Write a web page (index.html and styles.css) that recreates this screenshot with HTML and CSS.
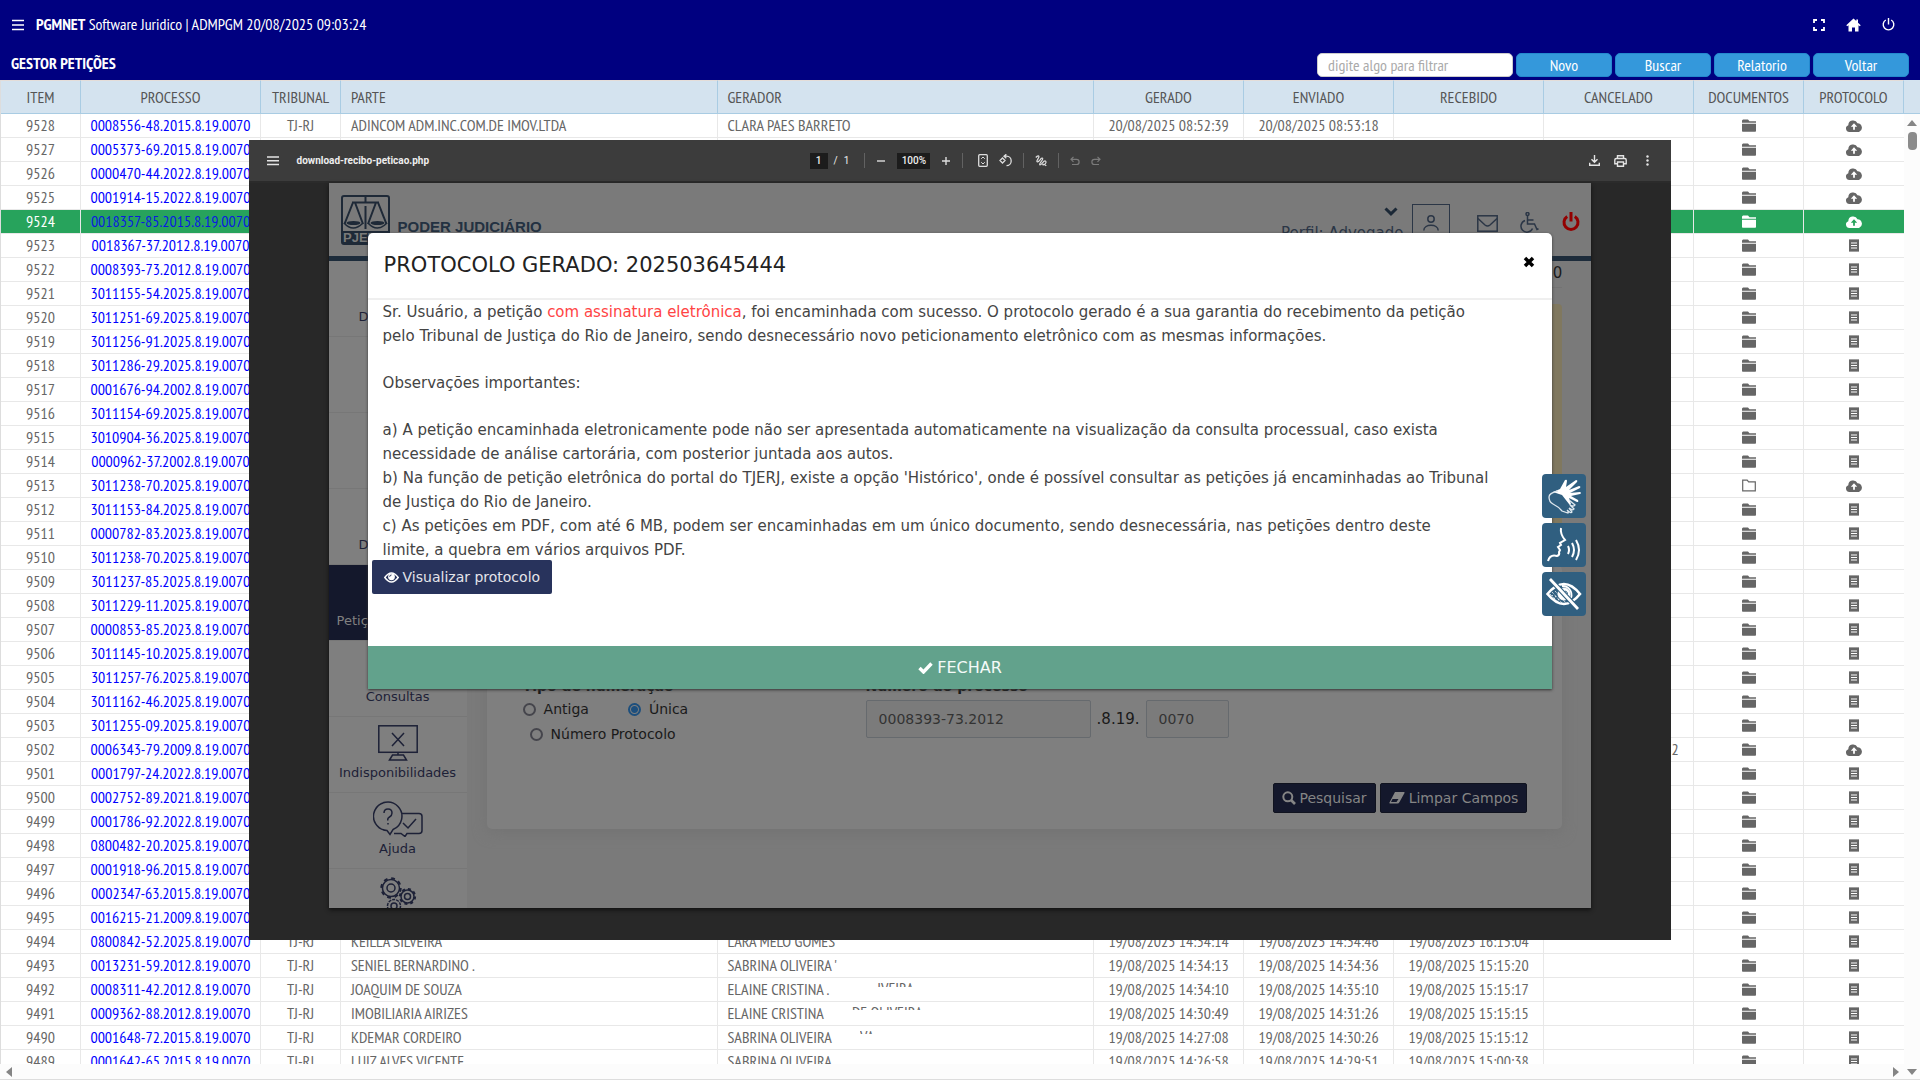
FILE: index.html
```html
<!DOCTYPE html>
<html lang="pt-BR">
<head>
<meta charset="utf-8">
<title>PGMNET Software Juridico</title>
<link rel="stylesheet" href="styles.css">
</head>
<body>
<svg class="sprite" aria-hidden="true">
  <symbol id="folder" viewBox="0 0 14 13"><path d="M0 1.5 1 .5h5l1.5 1.7H14v1.5H0zM0 4.7h14V12q0 .8-.8.8H.8Q0 12.800 0 12z"/></symbol>
  <symbol id="folder-open" viewBox="0 0 14 13"><path d="M.7 11.800V1.200h4.500l1.400 1.700h6.700v8.900z" fill="none" stroke="currentColor" stroke-width="1.200"/></symbol>
  <symbol id="cloud" viewBox="0 0 16 12"><path fill-rule="evenodd" d="M3.500 12A3.500 3.500 0 0 1 2.300 5.200 4.800 4.800 0 0 1 11.500 3.300 4.500 4.500 0 0 1 13 12zM8 3.300 4.800 6.800h2.300v2.900h1.800V6.800h2.300z"/></symbol>
  <symbol id="receipt" viewBox="0 0 10 13"><path fill-rule="evenodd" d="M0 0l1 .8L2 0l1 .8L4 0l1 .8L6 0l1 .8L8 0l1 .8L10 0v13l-1-.8-1 .8-1-.8-1 .8-1-.8-1 .8-1-.8-1 .8-1-.8-1 .8zM2 3.400v1h6v-1zm0 2.600v1h6V6zm0 2.600v1h6v-1z"/></symbol>
</svg>

<header class="topbar">
  <div class="brand-row">
    <button class="icon-btn" aria-label="Menu"><svg width="12" height="12" viewBox="0 0 12 12"><path d="M0 1.500h12M0 6h12M0 10.500h12" stroke="#fff" stroke-width="1.300"/></svg></button>
    <p class="brand"><b>PGMNET</b> Software Juridico | ADMPGM 20/08/2025 09:03:24</p>
    <nav class="top-icons">
      <button class="icon-btn" aria-label="Tela cheia"><svg width="12" height="12" viewBox="0 0 12 12" fill="none" stroke="#fff" stroke-width="1.800"><path d="M1 4V1h3M8 1h3v3M11 8v3H8M4 11H1V8"/></svg></button>
      <button class="icon-btn" aria-label="Início"><svg width="15" height="14" viewBox="0 0 15 14" fill="#fff"><path d="M7.500.5.3 7.300l.9.900L2.500 7.300V13.500H6V9.500h3v4h3.500V7.300l1.300.9.900-.9-2.700-2.600V1.500h-1.700v1.600z"/></svg></button>
      <button class="icon-btn" aria-label="Sair"><svg width="13" height="13" viewBox="0 0 13 13" fill="none" stroke="#fff" stroke-width="1.400"><path d="M6.500 0v6.500M3.800 2a5.300 5.300 0 1 0 5.400 0"/></svg></button>
    </nav>
  </div>
  <div class="action-row">
    <h1 class="screen-title">GESTOR PETIÇÕES</h1>
    <div class="actions">
      <input class="filter" type="text" placeholder="digite algo para filtrar" aria-label="Filtrar">
      <button class="action">Novo</button>
      <button class="action">Buscar</button>
      <button class="action">Relatorio</button>
      <button class="action">Voltar</button>
    </div>
  </div>
</header>

<main class="grid-area">
  <div class="grid-view">
    <table class="grid">
      <colgroup>
        <col class="c-item"><col class="c-proc"><col class="c-item"><col><col>
        <col class="c-date"><col class="c-date"><col class="c-date"><col class="c-date"><col class="c-docs"><col class="c-prot">
      </colgroup>
      <thead><tr>
        <th>ITEM</th><th>PROCESSO</th><th>TRIBUNAL</th><th class="left">PARTE</th><th class="left">GERADOR</th>
        <th>GERADO</th><th>ENVIADO</th><th>RECEBIDO</th><th>CANCELADO</th><th>DOCUMENTOS</th><th>PROTOCOLO</th>
      </tr></thead>
      <tbody id="rows"></tbody>
    </table>
    <div class="vscroll">
      <div class="vscroll-head"></div>
      <svg class="arrow-up" width="10" height="6" viewBox="0 0 10 6"><path d="M0 6 5 0l5 6z" fill="#858585"/></svg>
      <div class="thumb"></div>
    </div>
  </div>
  <div class="hscroll">
    <svg width="6" height="10" viewBox="0 0 6 10"><path d="M6 0 0 5l6 5z" fill="#858585"/></svg>
    <span class="spacer"></span>
    <svg width="6" height="10" viewBox="0 0 6 10"><path d="M0 0l6 5-6 5z" fill="#858585"/></svg>
    <svg width="10" height="6" viewBox="0 0 10 6"><path d="M0 0h10L5 6z" fill="#858585"/></svg>
  </div>
</main>

<div class="overlay">
  <section class="viewer" aria-label="download-recibo-peticao.php">
    <div class="toolbar">
      <div class="tb-left">
        <svg width="12" height="10" viewBox="0 0 12 10"><path d="M0 1h12M0 4.700h12M0 8.400h12" stroke="#e4e4e4" stroke-width="1.500"/></svg>
        <span class="file">download-recibo-peticao.php</span>
      </div>
      <div class="tb-mid">
        <span class="page-no"><input class="tb-input pg" value="1" aria-label="Página"> <span>/</span> <span>1</span></span>
        <i class="tb-sep"></i>
        <svg width="10" height="10" viewBox="0 0 10 10"><path d="M1 5h8" stroke="#ddd" stroke-width="1.400"/></svg>
        <input class="tb-input zoom" value="100%" aria-label="Zoom">
        <svg width="10" height="10" viewBox="0 0 10 10"><path d="M1 5h8M5 1v8" stroke="#ddd" stroke-width="1.400"/></svg>
        <i class="tb-sep"></i>
        <svg class="fit" width="10" height="13" viewBox="0 0 10 13" fill="none" stroke="#ddd" stroke-width="1.300"><rect x=".7" y=".7" width="8.600" height="11.600" rx="1"/><path d="M3.200 4.800 5 3l1.800 1.800M3.200 8.200 5 10l1.800-1.800" stroke-width="1"/></svg>
        <svg width="13" height="13" viewBox="0 0 13 13" fill="none" stroke="#ddd" stroke-width="1.300"><path d="M3.500 4 6 6.500 3.500 9 1 6.500zM5 2.200h2.500a4.700 4.700 0 0 1 0 9.400M7.300.2 5 2.200l2.300 2"/></svg>
        <i class="tb-sep"></i>
        <svg width="12" height="12" viewBox="0 0 12 12" fill="none" stroke="#ddd" stroke-width="1.200"><path d="M.8 2.500C2.500.5 4.500.3 3.800 2.200S.8 6.500 2.500 6.800 6.300 2 7.600 3.200 3.500 8.800 4.800 9.800 8.500 5.200 10.300 6 10 10 8.300 10s.2-2 3 .8"/></svg>
        <i class="tb-sep"></i>
        <svg width="10" height="10" viewBox="0 0 10 10" fill="none" stroke="#7b7b7b" stroke-width="1.200"><path d="M3.500.8 1 3.300l2.500 2.500M1.200 3.300H6.500a2.600 2.600 0 0 1 0 5.200H2"/></svg>
        <svg width="10" height="10" viewBox="0 0 10 10" fill="none" stroke="#7b7b7b" stroke-width="1.200"><path d="M6.500.8 9 3.300 6.500 5.800M8.800 3.300H3.500a2.600 2.600 0 0 0 0 5.200H8"/></svg>
      </div>
      <div class="tb-right">
        <svg width="11" height="11" viewBox="0 0 11 11" fill="none" stroke="#e4e4e4" stroke-width="1.400"><path d="M5.500 0v7M2.500 4.300l3 3 3-3M.7 7.800v2.500h9.600V7.800"/></svg>
        <svg width="13" height="12" viewBox="0 0 13 12" fill="none" stroke="#e4e4e4" stroke-width="1.400"><path d="M3.500 3.500V.8h6v2.700M3 8.800H.8V5q0-1.500 1.500-1.500h8.400q1.500 0 1.500 1.500v3.800H10M3.500 7h6v4.300h-6z"/></svg>
        <svg width="13" height="11" viewBox="0 0 13 11" fill="#e4e4e4"><circle cx="6.500" cy="1.500" r="1.200"/><circle cx="6.500" cy="5.500" r="1.200"/><circle cx="6.500" cy="9.500" r="1.200"/></svg>
      </div>
    </div>

    <div class="canvas">
      <div class="sheet">
        <header class="court-head">
          <svg class="logo" width="49" height="50" viewBox="0 0 49 50">
            <rect x="1" y="1" width="47" height="48" rx="2" fill="none" stroke="#1e2937" stroke-width="2"/>
            <rect x="1" y="36" width="47" height="13" fill="#1e2937"/>
            <path d="M24.500 2v5M11 7.500h27M24.500 11v23M12 7.500 3.500 29M14 7.500 22 29M35 7.500 27 29M37 7.500 45.500 29" fill="none" stroke="#1e2937" stroke-width="2"/>
            <path d="M3 28q9 10 19 0M27 28q9 10 19 0" fill="none" stroke="#1e2937" stroke-width="1.500"/>
            <ellipse cx="12.500" cy="28" rx="7" ry="2" fill="#1e2937"/><ellipse cx="36.500" cy="28" rx="7" ry="2" fill="#1e2937"/>
            <text x="2" y="47" font-family="Liberation Sans" font-size="13" font-weight="700" fill="#7a7a7a">PJERJ</text>
          </svg>
          <strong class="court-name">PODER JUDICIÁRIO</strong>
          <span class="profile">
            <svg width="14" height="9" viewBox="0 0 14 9"><path d="M1.500 1.500 7 6.800l5.500-5.300" fill="none" stroke="#1b2836" stroke-width="3"/></svg>
            <span>Perfil: Advogado</span>
          </span>
          <span class="user-box"><svg width="16" height="16" viewBox="0 0 16 16" fill="none" stroke="#2b3646" stroke-width="1.500"><circle cx="8" cy="4" r="3.200"/><path d="M.8 15.500c0-7 14.400-7 14.400 0"/></svg></span>
          <svg class="mail" width="21" height="17" viewBox="0 0 21 17" fill="none" stroke="#2b3646" stroke-width="1.500"><rect x=".8" y=".8" width="19.400" height="15.400"/><path d="M1 3.500 8 10q2.500 2 5 0l7-6.500"/></svg>
          <svg class="chair" width="19" height="21" viewBox="0 0 19 21" fill="none" stroke="#2b3646" stroke-width="1.500"><circle cx="7.500" cy="2" r="1.500"/><path d="M7.500 4v8h7l2.500 5.500 1.500-.7M7.500 8h6M5 8.500a6 6 0 1 0 7.500 8"/></svg>
          <svg class="off" width="18" height="20" viewBox="0 0 18 20" fill="none" stroke="#930000" stroke-width="3"><path d="M9 0v9.500M5.200 4.500a7 7 0 1 0 7.600 0"/></svg>
        </header>
        <div class="court-body">
          <nav class="side">
            <a href="#" class="side-item start">D</a>
            <a href="#" class="side-item"></a>
            <a href="#" class="side-item"></a>
            <a href="#" class="side-item start">D</a>
            <a href="#" class="side-item active">Petições</a>
            <a href="#" class="side-item">Consultas</a>
            <a href="#" class="side-item"><svg width="40" height="36" viewBox="0 0 40 36" fill="none" stroke="#1d2137" stroke-width="1.500"><rect x=".8" y=".8" width="38.400" height="26.500"/><path d="M14 8l12 13M26 8 14 21M20 28v2M11.500 35l3-5h11l3 5z"/></svg>Indisponibilidades</a>
            <a href="#" class="side-item"><svg width="50" height="36" viewBox="0 0 50 36" fill="none" stroke="#1d2137" stroke-width="1.500"><path d="M14 29.500A14.200 14.200 0 1 1 20 28.500L17 33.500z"/><path d="M29 12.500h17q3 0 3 3v14q0 3-3 3H34l-2 3-4-3H21M30 22l5 5 8-9M11 12q0-4 4-4t4 4q0 2.500-2.500 4T15 19.500M15 22v1.500"/></svg>Ajuda</a>
            <a href="#" class="side-item last"><svg width="38" height="36" viewBox="0 0 38 36" fill="none" stroke="#1d2137" stroke-width="1.500"><circle cx="12" cy="11" r="4"/><circle cx="12" cy="11" r="8.500"/><circle cx="12" cy="11" r="9.700" stroke-width="2" stroke-dasharray="3.800 3.800"/><circle cx="28.500" cy="19.500" r="3"/><circle cx="28.500" cy="19.500" r="6.500"/><circle cx="28.500" cy="19.500" r="7.600" stroke-dasharray="3 3" stroke-width="2"/><circle cx="15" cy="29" r="3"/><circle cx="15" cy="29" r="6.500" stroke-dasharray="3 1"/></svg></a>
          </nav>
          <div class="content">
            <p class="crumb">0</p>
            <div class="notice"></div>
            <form class="panel">
              <div class="fields">
                <fieldset class="kinds">
                  <legend>Tipo de numeração</legend>
                  <div class="radio-row">
                    <label><input type="radio" name="tipo"> Antiga</label>
                    <label><input type="radio" name="tipo" checked> Única</label>
                  </div>
                  <div class="radio-row second"><label><input type="radio" name="tipo"> Número Protocolo</label></div>
                </fieldset>
                <div class="number">
                  <label for="num">Número do processo</label>
                  <div class="number-row"><input id="num" class="num" value="0008393-73.2012"><span>.8.19.</span><input class="num origin" value="0070" aria-label="Origem"></div>
                </div>
              </div>
              <div class="panel-actions">
                <button type="button" class="dark-btn"><svg width="14" height="14" viewBox="0 0 14 14" fill="none" stroke="#858585"><circle cx="5.800" cy="5.800" r="4.500" stroke-width="2"/><path d="M9 9l4 4" stroke-width="2.600"/></svg>Pesquisar</button>
                <button type="button" class="dark-btn"><svg width="16" height="12" viewBox="0 0 16 12"><path d="M6 0h9q1 0 .5 1L10.500 10q-.8 1.500-2 1.500H1Q0 11.500.5 10.500zM3.500 7 2 10h5.500l2-3z" fill="#858585" fill-rule="evenodd"/></svg>Limpar Campos</button>
              </div>
            </form>
          </div>
        </div>

        <div class="receipt" role="dialog" aria-labelledby="receipt-title">
          <div class="receipt-head">
            <h2 id="receipt-title">PROTOCOLO GERADO: 202503645444</h2>
            <button class="close" aria-label="Fechar"><svg width="12" height="12" viewBox="0 0 12 12"><path d="M2 2l8 8M10 2 2 10" stroke="#000" stroke-width="3.500"/></svg></button>
          </div>
          <div class="receipt-text">
            <p>Sr. Usuário, a petição <span class="red">com assinatura eletrônica</span>, foi encaminhada com sucesso. O protocolo gerado é a sua garantia do recebimento da petição<br>pelo Tribunal de Justiça do Rio de Janeiro, sendo desnecessário novo peticionamento eletrônico com as mesmas informações.</p>
            <p>Observações importantes:</p>
            <p>a) A petição encaminhada eletronicamente pode não ser apresentada automaticamente na visualização da consulta processual, caso exista<br>necessidade de análise cartorária, com posterior juntada aos autos.<br>b) Na função de petição eletrônica do portal do TJERJ, existe a opção 'Histórico', onde é possível consultar as petições já encaminhadas ao Tribunal<br>de Justiça do Rio de Janeiro.<br>c) As petições em PDF, com até 6 MB, podem ser encaminhadas em um único documento, sendo desnecessária, nas petições dentro deste<br>limite, a quebra em vários arquivos PDF.</p>
          </div>
          <button class="view-btn"><svg width="15" height="11" viewBox="0 0 15 11"><path d="M.8 5.500q6.700-9 13.400 0-6.700 9-13.400 0z" fill="none" stroke="#fff" stroke-width="1.500"/><circle cx="7.500" cy="4.800" r="3.400" fill="#fff"/><path d="M5.700 4.800a1.800 1.800 0 0 1 1.800-1.800" stroke="#28335c" fill="none"/></svg>Visualizar protocolo</button>
          <button class="done"><svg width="15" height="12" viewBox="0 0 15 12"><path d="M1.500 6 5.500 10l8-8.500" fill="none" stroke="#fff" stroke-width="3.400"/></svg>FECHAR</button>
        </div>

        <div class="assist">
          <button aria-label="Libras"><svg width="36" height="36" viewBox="0 0 36 36"><path d="M7 14 14 11 19 2q2-1 2 1l-1 6 10-7q2 0 1 2l-8 8 10-4q2 0 1 2l-10 5 10-1q2 1 0 2l-9 2 7 4q1 2-1 2l-8-4 2 6q-1 2-2 0l-7-9z" fill="#fff"/><path d="M12 13q-9 2-9 6 0 5 4 7 6 3 9 7l6 2q1-1-1-3 4 4 5 2l-3-4q4 3 5 1l-4-4q4 2 5 0l-6-5" fill="none" stroke="#dfe8ee" stroke-width="1.300"/></svg></button>
          <button aria-label="Voz"><svg width="36" height="36" viewBox="0 0 36 36" fill="none" stroke="#fff" stroke-width="2"><path d="M15 1q-1 6 4 12l-5 3 1 2-3 2 2 3-1 2q1 3-2 4-7-2-9 5"/><path d="M22 19q2 4 0 8M26 16q4 7 0 14M30 13q6 10 0 20"/></svg></button>
          <button aria-label="Baixa visão"><svg width="36" height="36" viewBox="0 0 36 36" fill="none" stroke="#fff"><path d="M1.500 18Q18-2 34 18 18 38 1.500 18z" stroke-width="2.600"/><circle cx="18" cy="18" r="6" fill="#fff"/><path d="M19 15a3 3 0 0 1 2.500 3" stroke="#305f80"/><path d="M16 10a9 9 0 0 1 9 12" stroke-width="1.800"/><path d="M4 18l8 8M6 16l10 11M9 15l11 12M7 19l-1 1M10 20l-2 3M13 23l-2 3" stroke-width="1" stroke-dasharray="1 1"/><path d="M4 3l28 30" stroke="#305f80" stroke-width="5"/><path d="M4 3l28 30" stroke-width="2.800"/></svg></button>
        </div>
      </div>
    </div>
  </section>
</div>
<script src="script.js"></script>
</body>
</html>
```
FILE: styles.css
```css
* { box-sizing: border-box; }
html, body { height: 100%; }
body { margin: 0; display: flex; flex-direction: column; overflow: hidden; background: #fff; color: #666; font-family: "PT Sans Narrow", "Liberation Sans Narrow", "Open Sans Condensed", "Roboto Condensed", "DejaVu Sans Condensed", sans-serif; font-size: 16px; }
p, h1, h2 { margin: 0; }
button, input { font: inherit; }
svg { display: block; flex: none; }
.sprite { position: absolute; width: 0; height: 0; }

.topbar { flex: none; height: 80px; background: #000080; color: #fff; }
.brand-row { display: flex; align-items: center; height: 49px; padding: 0 25px 0 12px; }
.brand { margin-left: 12px; padding-bottom: 2px; flex: 1; }
.icon-btn { padding: 0; border: 0; background: none; }
.top-icons { display: flex; align-items: center; gap: 21px; }
.action-row { display: flex; align-items: center; justify-content: space-between; height: 31px; padding: 0 11px; }
.screen-title { padding-bottom: 3px; font-size: 16px; line-height: 20px; font-weight: 700; }
.actions { display: flex; gap: 3px; padding-top: 1px; }
.filter { width: 196px; height: 24px; border: 1px solid #ccc; border-radius: 5px; padding: 0 10px; background: #fff; outline: 0; }
.filter::placeholder { color: #aaa; }
.action { width: 96px; height: 24px; padding: 0; border: 1px solid #2489ce; border-radius: 5px; background: #3498db; color: #fff; }

.grid-area { flex: 1; min-height: 0; display: flex; flex-direction: column; border-bottom: 1px solid #ddd; }
.grid-view { flex: 1; min-height: 0; display: flex; align-items: flex-start; overflow: hidden; }
.grid { flex: 1; width: 100%; min-width: 0; table-layout: fixed; border-collapse: separate; border-spacing: 0; border-left: 1px solid #ddd; }
.c-item { width: 80px; } .c-proc { width: 180px; } .c-date { width: 150px; } .c-docs { width: 110px; } .c-prot { width: 100px; }
.grid th { height: 34px; padding: 0; border-top: 1px solid #e4ddd8; border-right: 1px solid #a9cce3; border-bottom: 1px solid #a9cce3; background: #d4e3ef; color: #555; font-weight: 400; text-align: center; }
.grid td { height: 24px; padding: 0; border-right: 1px solid #e8e8e8; border-bottom: 1px solid #e8e8e8; line-height: 23px; text-align: center; white-space: nowrap; overflow: hidden; }
.grid td:last-child { border-right: 0; }
.grid .left { padding-left: 10px; text-align: left; }
.grid a { color: #00f; text-decoration: none; }
.grid .selected td { background: #27a35c; color: #fff; }
.grid .selected a { color: #0a1ae0; }
.grid svg { margin: 0 auto; fill: currentColor; }
.trace { display: inline-block; height: 4px; margin: 5px 0 0 48px; line-height: 10px; overflow: hidden; vertical-align: top; }
.trace.near { height: 3px; margin-left: 28px; }
.vscroll { flex: none; width: 16px; align-self: stretch; display: flex; flex-direction: column; align-items: center; background: #fcfcfc; }
.vscroll-head { width: 100%; height: 34px; border-bottom: 1px solid #a9cce3; background: #d4e3ef; }
.arrow-up { margin-top: 6px; }
.thumb { width: 9px; height: 18px; margin-top: 6px; border-radius: 4px; background: #8b8b8b; }
.hscroll { flex: none; display: flex; align-items: center; gap: 8px; height: 15px; padding: 0 3px 0 6px; background: #fcfcfc; }
.spacer { flex: 1; }

.overlay { position: fixed; inset: 0; display: grid; place-items: center; }
.viewer { display: flex; flex-direction: column; width: calc(74vw + 2px); height: 74vh; background: #282828; font-family: Roboto, sans-serif; font-size: 10px; color: #eee; }
.toolbar { flex: none; display: grid; grid-template-columns: 1fr auto 1fr; align-items: center; height: 43px; padding: 0 17px 0 18px; border-bottom: 2px solid #2b2b2b; background: #3c3c3c; }
.tb-left, .tb-mid, .tb-right, .page-no { display: flex; align-items: center; }
.tb-left { gap: 18px; }
.file { font-weight: 700; }
.tb-mid { gap: 11px; padding-right: 10px; }
.page-no { gap: 6px; margin-right: 4px; }
.tb-input { height: 16px; padding: 0; border: 0; background: #1c1c1c; color: #eee; font-size: 10px; font-weight: 500; text-align: center; }
.pg { width: 18px; }
.zoom { width: 33px; }
.tb-sep { width: 1px; height: 15px; background: #626262; }
.fit { margin-left: 4px; }
.tb-right { justify-content: flex-end; gap: 14px; }
.canvas { flex: 1; min-height: 0; padding: 0 80px 32px; }

.sheet { position: relative; display: flex; flex-direction: column; height: 100%; background: #7a7a7a; box-shadow: 0 2px 4px #111; font-family: "DejaVu Sans", sans-serif; font-size: 14px; }
.court-head { flex: none; display: flex; height: 78px; padding: 12px 11px 0 12px; border-bottom: 5px solid #1d2c3b; color: #2b3646; overflow: hidden; }
.court-name { flex: 1; padding: 22px 0 0 8px; font: 700 15px/20px "Liberation Sans", sans-serif; color: #233141; }
.profile { display: flex; flex-direction: column; align-items: flex-end; gap: 7px; padding-top: 12px; font-size: 15px; line-height: 20px; }
.profile svg { margin-right: 5px; }
.user-box { width: 38px; height: 42px; margin: 9px 27px 0 9px; padding: 10px; border: 1px solid #2b3646; }
.mail { margin: 20px 22px 0 0; }
.chair { margin: 17px 23px 0 0; }
.off { margin-top: 17px; }
.court-body { flex: 1; min-height: 0; display: flex; overflow: hidden; }
.side { flex: none; width: 138px; background: #7f7f7f; font-size: 13px; }
.side-item { display: flex; flex-direction: column; align-items: center; justify-content: flex-end; gap: 2px; height: 76px; padding-bottom: 9px; border-bottom: 1px solid #777; color: #1d2137; line-height: 20px; text-decoration: none; }
.side-item.start { align-items: flex-start; padding-left: 30px; }
.side-item.active { align-items: flex-start; padding-left: 8px; background: #14182c; color: #808080; }
.side-item.last { padding-bottom: 31px; }
.content { flex: 1; min-width: 0; padding: 0 29px 0 20px; color: #1a1a1a; }
.crumb { height: 27px; padding-top: 2px; border-bottom: 1px solid #737373; font-size: 15px; line-height: 20px; text-align: right; }
.notice { height: 241px; margin: 16px 0 20px; border-radius: 4px; background: #80785f; }
.panel { padding: 111px 35px 16px 36px; border-radius: 5px; background: #7f7f7f; box-shadow: 0 4px 14px #747474; }
.fields { display: flex; height: 107px; }
.kinds { width: 343px; margin: 0; padding: 0; border: 0; }
.kinds legend, .number > label { display: block; padding: 0; font-weight: 700; line-height: 20px; }
.radio-row { display: flex; gap: 39px; padding-top: 3px; line-height: 20px; }
.radio-row.second { padding: 5px 0 0 7px; }
.radio-row label { display: flex; align-items: center; gap: 8px; }
.radio-row input { appearance: none; width: 13px; height: 13px; margin: 0; border: 2px solid #45454c; border-radius: 50%; }
.radio-row input:checked { border-color: #1d4f7d; background: radial-gradient(#1d4f7d 3px, #7f7f7f 4px); }
.number-row { display: flex; align-items: center; gap: 6px; padding-top: 4px; font-size: 15px; }
.num { width: 225px; height: 38px; padding: 0 12px; border: 1px solid #666a6e; border-radius: 2px; background: #7b7b7b; color: #333; font-size: 14px; }
.origin { width: 83px; }
.panel-actions { display: flex; justify-content: flex-end; gap: 4px; }
.dark-btn { display: flex; align-items: center; gap: 4px; height: 30px; padding: 0 8px; border: 1px solid #10131f; border-radius: 2px; background: #14182c; color: #858585; font-size: 14px; white-space: nowrap; }

.receipt { position: absolute; top: 50px; left: 39px; right: 39px; display: flex; flex-direction: column; align-items: flex-start; height: 456px; border-radius: 5px 5px 0 0; background: #fff; box-shadow: 0 1px 3px #333; color: #444; }
.receipt-head { align-self: stretch; display: flex; justify-content: space-between; align-items: flex-start; height: 67px; padding: 18px 17px 0 16px; border-bottom: 2px solid #efefef; }
.receipt h2 { color: #222; font-size: 21px; line-height: 28px; font-weight: 400; }
.close { margin-top: 5px; padding: 0; border: 0; background: none; }
.receipt-text { padding: 0 15px; font-size: 15px; line-height: 24px; white-space: nowrap; }
.receipt-text p + p { margin-top: 23px; }
.red { color: #f44; }
.view-btn { display: flex; align-items: center; gap: 4px; height: 34px; margin: -2px 0 0 4px; padding: 0 12px; border: 0; border-radius: 2px; background: #28335c; color: #e4e4ea; font-size: 14px; }
.done { align-self: stretch; display: flex; align-items: center; justify-content: center; gap: 4px; height: 43px; margin-top: auto; border: 0; background: #62a28c; color: #f4faf8; font-size: 16px; }
.assist { position: absolute; top: 291px; right: 5px; display: flex; flex-direction: column; gap: 5px; }
.assist button { width: 44px; height: 44px; padding: 4px; border: 0; border-radius: 4px; background: #305f80; }
```
FILE: script.js
```js
const processes = [
  "0008556-48.2015", "0005373-69.2015", "0000470-44.2022", "0001914-15.2022", "0018357-85.2015",
  "0018367-37.2012", "0008393-73.2012", "3011155-54.2025", "3011251-69.2025", "3011256-91.2025",
  "3011286-29.2025", "0001676-94.2002", "3011154-69.2025", "3010904-36.2025", "0000962-37.2002",
  "3011238-70.2025", "3011153-84.2025", "0000782-83.2023", "3011238-70.2025", "3011237-85.2025",
  "3011229-11.2025", "0000853-85.2023", "3011145-10.2025", "3011257-76.2025", "3011162-46.2025",
  "3011255-09.2025", "0006343-79.2009", "0001797-24.2022", "0002752-89.2021", "0001786-92.2022",
  "0800482-20.2025", "0001918-96.2015", "0002347-63.2015", "0016215-21.2009", "0800842-52.2025",
  "0013231-59.2012", "0008311-42.2012", "0009362-88.2012", "0001648-72.2015", "0001642-65.2015"
];

// parte, gerador, gerado, enviado, recebido, cancelado
const details = {
  9528: ["ADINCOM ADM.INC.COM.DE IMOV.LTDA", "CLARA PAES BARRETO", "20/08/2025 08:52:39", "20/08/2025 08:53:18", "", ""],
  9502: ["", "", "", "", "", "19/08/2025 15:20:32"],
  9494: ["KEILLA SILVEIRA", "LARA MELO GOMES", "19/08/2025 14:34:14", "19/08/2025 14:34:46", "19/08/2025 16:15:04", ""],
  9493: ["SENIEL BERNARDINO .", "SABRINA OLIVEIRA '", "19/08/2025 14:34:13", "19/08/2025 14:34:36", "19/08/2025 15:15:20", ""],
  9492: ["JOAQUIM DE SOUZA", "ELAINE CRISTINA .<span class=\"trace\">IVEIRA</span>", "19/08/2025 14:34:10", "19/08/2025 14:35:10", "19/08/2025 15:15:17", ""],
  9491: ["IMOBILIARIA AIRIZES", "ELAINE CRISTINA<span class=\"trace near\">DE OLIVEIRA</span>", "19/08/2025 14:30:49", "19/08/2025 14:31:26", "19/08/2025 15:15:15", ""],
  9490: ["KDEMAR CORDEIRO", "SABRINA OLIVEIRA<span class=\"trace near\">VA</span>", "19/08/2025 14:27:08", "19/08/2025 14:30:26", "19/08/2025 15:15:12", ""],
  9489: ["LUIZ ALVES VICENTE", "SABRINA OLIVEIRA", "19/08/2025 14:26:58", "19/08/2025 14:29:51", "19/08/2025 15:00:38", ""]
};
const uploads = [9528, 9527, 9526, 9525, 9524, 9513, 9502];

document.getElementById("rows").innerHTML = processes.map((number, i) => {
  const item = 9528 - i;
  const d = details[item] || ["", "", "", "", "", ""];
  const folder = item === 9513 ? "folder-open" : "folder";
  const proto = uploads.includes(item)
    ? '<svg width="16" height="12"><use href="#cloud"/></svg>'
    : '<svg width="10" height="13"><use href="#receipt"/></svg>';
  return `<tr${item === 9524 ? ' class="selected"' : ""}>
    <td>${item}</td><td><a href="#">${number}.8.19.0070</a></td><td>TJ-RJ</td>
    <td class="left">${d[0]}</td><td class="left">${d[1]}</td>
    <td>${d[2]}</td><td>${d[3]}</td><td>${d[4]}</td><td>${d[5]}</td>
    <td><svg width="14" height="13"><use href="#${folder}"/></svg></td><td>${proto}</td></tr>`;
}).join("");
```
